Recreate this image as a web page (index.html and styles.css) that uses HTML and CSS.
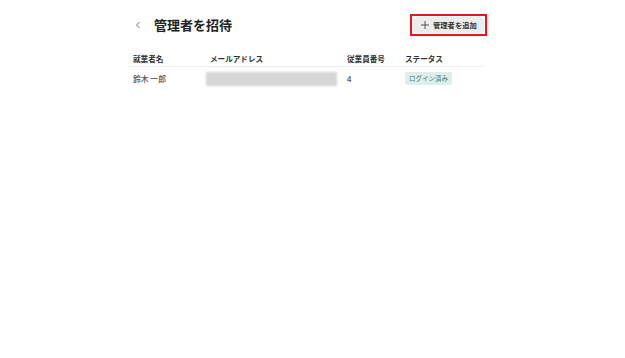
FILE: index.html
```html
<!DOCTYPE html>
<html lang="ja">
<head>
<meta charset="UTF-8">
<meta name="viewport" content="width=device-width, initial-scale=1.0">
<title>管理者を招待</title>
<link rel="stylesheet" href="styles.css">
</head>
<body>

<div class="page">
  <div class="page-header">
    <div class="title-group">
      <a class="back" href="#">
        <svg width="6" height="8" viewBox="0 0 6 8"><path d="M4.5 1 L1.5 4 L4.5 7" fill="none" stroke="#777" stroke-width="1"/></svg>
      </a>
      <h1>管理者を招待</h1>
    </div>
    <span class="highlight">
      <button class="add-btn" type="button">
        <svg width="8" height="8" viewBox="0 0 8 8"><path d="M4 0 V8 M0 4 H8" stroke="#555" stroke-width="1"/></svg>
        管理者を追加
      </button>
    </span>
  </div>

  <table class="members">
    <colgroup>
      <col class="c-name">
      <col class="c-mail">
      <col class="c-no">
      <col class="c-status">
    </colgroup>
    <thead>
      <tr>
        <th>就業者名</th>
        <th>メールアドレス</th>
        <th>従業員番号</th>
        <th>ステータス</th>
      </tr>
    </thead>
    <tbody>
      <tr>
        <td>鈴木 一郎</td>
        <td><div class="masked"></div></td>
        <td>4</td>
        <td><span class="badge">ログイン済み</span></td>
      </tr>
    </tbody>
  </table>
</div>

</body>
</html>
```

FILE: styles.css
```css
body {
  margin: 0;
  background: #fff;
  font-family: "Noto Sans CJK JP", "Noto Sans", sans-serif;
  color: #333;
}
.page {
  width: 355px;
  margin-left: 128px;
  padding-top: 14px;
}
.page-header {
  display: flex;
  align-items: center;
  justify-content: space-between;
  height: 22px;
}
.title-group {
  display: flex;
  align-items: center;
}
.back {
  display: flex;
  align-items: center;
  margin-left: 7px;
  width: 19px;
}
h1 {
  margin: 0;
  font-size: 13px;
  font-weight: bold;
  color: #222;
  line-height: 16px;
}
.highlight {
  display: flex;
  padding: 1px;
  margin-right: -4px;
  border: 2px solid #e8151b;
}
.add-btn {
  display: flex;
  align-items: center;
  gap: 4px;
  height: 16px;
  width: 71px;
  padding: 0 0 0 8px;
  border: none;
  border-radius: 3px;
  background: #ececec;
  color: #333;
  font-family: inherit;
  font-size: 7.3px;
  font-weight: bold;
}
.members {
  margin-top: 14px;
  width: 355px;
  border-collapse: collapse;
  table-layout: fixed;
}
.c-name { width: 77px; }
.c-mail { width: 137px; }
.c-no { width: 58px; }
.c-status { width: 83px; }
th {
  height: 16px;
  padding: 0 0 0 5px;
  text-align: left;
  font-size: 7.6px;
  font-weight: bold;
  color: #333;
  border-bottom: 1px solid #ececec;
}
td {
  height: 23px;
  padding: 0 0 0 5px;
  font-size: 7.8px;
  font-weight: 500;
  color: #555;
  vertical-align: middle;
}
.masked {
  width: 131px;
  height: 14px;
  margin-left: -4px;
  background: #d6d6d6;
  filter: blur(1.2px);
}
.badge {
  display: inline-block;
  padding: 0 4px;
  line-height: 13px;
  font-size: 6.5px;
  font-weight: 400;
  color: #3d7a6c;
  background: #dfeeea;
  border-radius: 2px;
}
```
